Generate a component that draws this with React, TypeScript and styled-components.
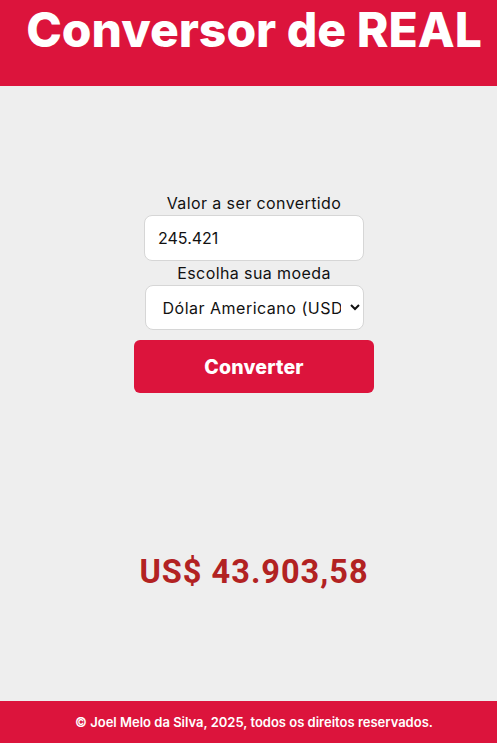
import React, { useState } from 'react'
import styled, { createGlobalStyle } from 'styled-components'

const GlobalStyle = createGlobalStyle`
    html, body {
        margin: 0;
        padding: 0;
        background-color: #eeeeee;
    }
    body {
        font-family: Inter, "Noto Sans", sans-serif;
    }
`

const Page = styled.div`
    display: flex;
    flex-direction: column;
    min-height: 743px;
`

const Header = styled.header`
    box-sizing: border-box;
    height: 86px;
    padding-left: 11px;
    background-color: #dc143c;
    display: flex;
    justify-content: center;
`

const Title = styled.h1`
    margin: 0;
    padding-top: 1px;
    color: #ffffff;
    font-family: Inter, sans-serif;
    font-weight: 800;
    font-size: 48px;
    line-height: 58px;
`

const Main = styled.main`
    box-sizing: border-box;
    flex: 1;
    display: flex;
    flex-direction: column;
    align-items: center;
    padding: 105px 0 0 11px;
`

const Form = styled.form`
    display: flex;
    flex-direction: column;
    align-items: center;
`

const Label = styled.label`
    font-size: 16px;
    line-height: 24px;
    letter-spacing: 0.4px;
    color: #111111;
`

const Field = styled.input`
    box-sizing: border-box;
    width: 220px;
    height: 46px;
    padding: 0 13px;
    border: 1px solid #d6d6d6;
    border-radius: 8px;
    background: #ffffff;
    font-family: Inter, sans-serif;
    font-size: 16px;
    color: #111111;
    outline: none;
`

const Select = styled.select`
    box-sizing: border-box;
    width: 219px;
    height: 45px;
    padding: 0 6px 0 13px;
    border: 1px solid #d6d6d6;
    border-radius: 8px;
    background: #ffffff;
    font-family: Inter, sans-serif;
    font-size: 16px;
    letter-spacing: 0.5px;
    color: #111111;
    outline: none;
`

const Button = styled.button`
    margin-top: 10px;
    width: 240px;
    height: 53px;
    border: none;
    border-radius: 6px;
    background-color: #dc143c;
    color: #ffffff;
    font-family: Inter, sans-serif;
    font-weight: 800;
    font-size: 19.5px;
    letter-spacing: 0.2px;
    cursor: pointer;
`

const Result = styled.p`
    margin: 159px 0 0;
    color: #b22222;
    font-family: Roboto, sans-serif;
    font-weight: 700;
    font-size: 32.5px;
    letter-spacing: 1px;
    line-height: 40px;
`

const Footer = styled.footer`
    box-sizing: border-box;
    height: 42px;
    padding-left: 11px;
    background-color: #dc143c;
    display: flex;
    align-items: center;
    justify-content: center;
    color: #ffffff;
    font-weight: 600;
    font-size: 13px;
`

const App: React.FC = () => {
    const [value, setValue] = useState('245.421')
    const [currency, setCurrency] = useState('USD')

    return (
        <Page>
            <GlobalStyle />
            <Header>
                <Title>Conversor de REAL</Title>
            </Header>
            <Main>
                <Form onSubmit={(e) => e.preventDefault()}>
                    <Label htmlFor="valor">Valor a ser convertido</Label>
                    <Field id="valor" value={value} onChange={(e) => setValue(e.target.value)} />
                    <Label htmlFor="moeda">Escolha sua moeda</Label>
                    <Select id="moeda" value={currency} onChange={(e) => setCurrency(e.target.value)}>
                        <option value="USD">Dólar Americano (USD)</option>
                        <option value="EUR">Euro (EUR)</option>
                        <option value="GBP">Libra Esterlina (GBP)</option>
                    </Select>
                    <Button type="submit">Converter</Button>
                </Form>
                <Result>US$ 43.903,58</Result>
            </Main>
            <Footer>© Joel Melo da Silva, 2025, todos os direitos reservados.</Footer>
        </Page>
    )
}

export default App
